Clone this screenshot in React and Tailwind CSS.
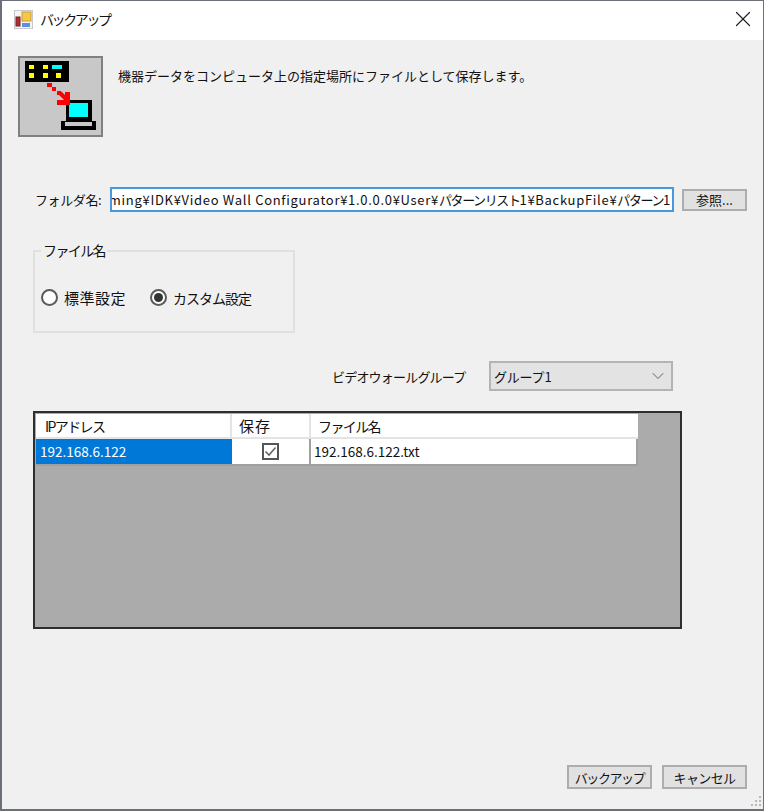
import { X, ChevronDown } from 'lucide-react';

const font = { fontFamily: '"Noto Sans CJK JP", "Liberation Sans", sans-serif' };

function AppIcon() {
  return (
    <svg width="19" height="19" viewBox="0 0 19 19" className="shrink-0">
      <rect x="0.5" y="0.5" width="18" height="18" fill="#f4f4f4" stroke="#c8c8c8" />
      <rect x="8" y="2" width="9" height="9" fill="#f5c84a" stroke="#c89a30" />
      <rect x="2" y="7" width="4" height="9" fill="#b03030" stroke="#702020" />
      <rect x="8" y="13" width="8" height="4" fill="#5b8fe0" />
    </svg>
  );
}

function DeviceIcon() {
  return (
    <div className="w-[85px] h-[81px] bg-[#c8c8c8] border-2 border-[#808080] shrink-0">
      <svg width="81" height="77" viewBox="0 0 81 77">
        <rect x="5" y="3" width="44" height="21" fill="#000000" />
        <rect x="9" y="7" width="5" height="4" fill="#ffff00" />
        <rect x="23" y="7" width="5" height="4" fill="#ffff00" />
        <rect x="32" y="7" width="10" height="4" fill="#00ffff" />
        <rect x="9" y="15" width="5" height="5" fill="#ffff00" />
        <rect x="23" y="15" width="5" height="5" fill="#ffff00" />
        <rect x="36" y="15" width="5" height="5" fill="#ffff00" />
        <rect x="46" y="42" width="26" height="21" fill="#000000" />
        <rect x="49" y="45" width="19" height="14" fill="#00ffff" />
        <rect x="41" y="63" width="35" height="9" fill="#000000" />
        <rect x="45" y="64" width="27" height="4" fill="#c8c8c8" />
        <rect x="27" y="25" width="5" height="4" fill="#ff0000" />
        <rect x="32" y="29" width="4" height="4" fill="#ff0000" />
        <rect x="37" y="33" width="4" height="4" fill="#ff0000" />
        <path d="M40 35 L47 42" stroke="#ff0000" strokeWidth="4" />
        <rect x="45" y="34" width="5" height="12" fill="#ff0000" />
        <rect x="37" y="42" width="13" height="5" fill="#ff0000" />
      </svg>
    </div>
  );
}

function Radio({ checked, children }) {
  return (
    <div className="flex items-center gap-[6px]">
      <div className="w-[17px] h-[17px] rounded-full border-2 border-[#5a5a5a] bg-white flex items-center justify-center">
        {checked && <div className="w-[9px] h-[9px] rounded-full bg-[#333333]" />}
      </div>
      {children}
    </div>
  );
}

function WinButton({ children, className }) {
  return (
    <button className={`bg-[#e1e1e1] border-2 border-[#adadad] text-[13px] leading-none text-[#111111] whitespace-nowrap flex items-center justify-center ${className}`}>
      {children}
    </button>
  );
}

function ResizeGrip() {
  return (
    <svg width="12" height="12" viewBox="0 0 12 12" className="absolute right-[1px] bottom-[1px]">
      <g fill="#b8b8b8">
        <rect x="9" y="0" width="2" height="2" />
        <rect x="5" y="4" width="2" height="2" />
        <rect x="9" y="4" width="2" height="2" />
        <rect x="1" y="8" width="2" height="2" />
        <rect x="5" y="8" width="2" height="2" />
        <rect x="9" y="8" width="2" height="2" />
      </g>
    </svg>
  );
}

export default function App() {
  return (
    <div className="w-[764px] h-[811px] bg-[#6b6f78] pl-[2px] pr-px pt-px pb-[2px] overflow-hidden" style={font}>
      <div className="relative w-full h-full bg-[#f0f0f0] flex flex-col">
        {/* Title bar */}
        <div className="h-[39px] bg-white flex items-center justify-between pl-[12px] pr-[7px] pb-[3px] shrink-0">
          <div className="flex items-center gap-[7px]">
            <AppIcon />
            <span className="text-[14px] leading-none text-[#111111] tracking-[-2.4px]">バックアップ</span>
          </div>
          <X size={26} strokeWidth={1.1} className="text-[#222222]" />
        </div>

        <div className="flex-1 flex flex-col pl-[16px] pr-[16px] pt-[16px]">
          {/* Description */}
          <div className="flex items-start gap-[15px]">
            <DeviceIcon />
            <p className="text-[13px] leading-none text-[#111111] pt-[13px]">機器データをコンピュータ上の指定場所にファイルとして保存します。</p>
          </div>

          {/* Folder name */}
          <div className="flex items-center mt-[50px] pl-[17px]">
            <span className="w-[75px] text-[13px] leading-none text-[#111111] whitespace-nowrap tracking-[-0.4px]">フォルダ名:</span>
            <div className="w-[564px] h-[25px] bg-white border-2 border-[#4a98dc] flex items-center justify-end overflow-hidden px-[1px]">
              <span className="text-[13px] leading-none text-[#111111] whitespace-nowrap tracking-[0.7px]">
                Roaming¥IDK¥Video Wall Configurator¥1.0.0.0¥User¥<span className="tracking-[-1.4px]">パターンリスト</span>1¥BackupFile¥<span className="tracking-[-1.4px]">パターン</span>1
              </span>
            </div>
            <WinButton className="w-[65px] h-[22px] ml-[8px]">参照...</WinButton>
          </div>

          {/* File name group */}
          <div className="w-[262px] h-[83px] border-2 border-[#e0e0e0] mt-[38px] ml-[15px] flex flex-col">
            <span className="self-start bg-[#f0f0f0] ml-[6px] -mt-[9px] px-[2px] text-[14px] leading-none text-[#111111] tracking-[-1.6px]">ファイル名</span>
            <div className="flex items-center gap-[24px] pl-[6px] mt-[32px]">
              <Radio>
                <span className="text-[15px] leading-none text-[#111111] tracking-[0.5px]">標準設定</span>
              </Radio>
              <Radio checked>
                <span className="text-[14px] leading-none text-[#111111] tracking-[-1px]">カスタム設定</span>
              </Radio>
            </div>
          </div>

          {/* Group selector */}
          <div className="flex items-center mt-[28px] pl-[314px]">
            <span className="w-[157px] text-[13px] leading-none text-[#111111] whitespace-nowrap tracking-[-0.8px]">ビデオウォールグループ</span>
            <div className="w-[184px] h-[30px] bg-[#e3e3e3] border-2 border-[#b4b4b4] flex items-center justify-between pl-[3px] pr-[3px]">
              <span className="text-[13px] leading-none text-[#111111] tracking-[-0.2px]">グループ1</span>
              <ChevronDown size={20} strokeWidth={1.1} className="text-[#555555]" />
            </div>
          </div>

          {/* Grid */}
          <div className="w-[649px] h-[218px] bg-[#ababab] border-2 border-[#2e2e2e] mt-[20px] ml-[15px] pt-px pl-px">
            <div className="flex h-[25px] text-[14px] leading-none text-[#111111]">
              <div className="w-[196px] bg-white border-r-2 border-b-2 border-[#e4e4e4] flex items-center pl-[9px] tracking-[-1.6px]">IPアドレス</div>
              <div className="w-[79px] bg-white border-r-2 border-b-2 border-[#e4e4e4] flex items-center pl-[7px] text-[15px] tracking-[1px]">保存</div>
              <div className="w-[327px] bg-white border-b-2 border-[#e4e4e4] flex items-center pl-[7px] tracking-[-1.6px]">ファイル名</div>
            </div>
            <div className="flex h-[27px] text-[13.5px] leading-none">
              <div className="w-[196px] bg-[#0078d7] text-white border-b-2 border-[#a0a0a0] flex items-center pl-[4px]">192.168.6.122</div>
              <div className="w-[79px] bg-white border-r-2 border-b-2 border-[#a0a0a0] flex items-center justify-center">
                <div className="w-[17px] h-[17px] border-2 border-[#555555] bg-white flex items-center justify-center">
                  <svg width="13" height="13" viewBox="0 0 13 13">
                    <path d="M1.5 6.5 L5 10 L11.5 2.5" fill="none" stroke="#666666" strokeWidth="1.6" />
                  </svg>
                </div>
              </div>
              <div className="w-[327px] bg-white border-b-2 border-r-2 border-[#a0a0a0] flex items-center pl-[3px] text-[#111111]">192.168.6.122.txt</div>
            </div>
          </div>

          {/* Footer */}
          <div className="flex-1 flex items-end justify-end gap-[10px] pb-[20px]">
            <WinButton className="w-[85px] h-[24px] tracking-[-1.4px]">バックアップ</WinButton>
            <WinButton className="w-[85px] h-[24px] tracking-[-0.6px]">キャンセル</WinButton>
          </div>
        </div>
        <ResizeGrip />
      </div>
    </div>
  );
}
